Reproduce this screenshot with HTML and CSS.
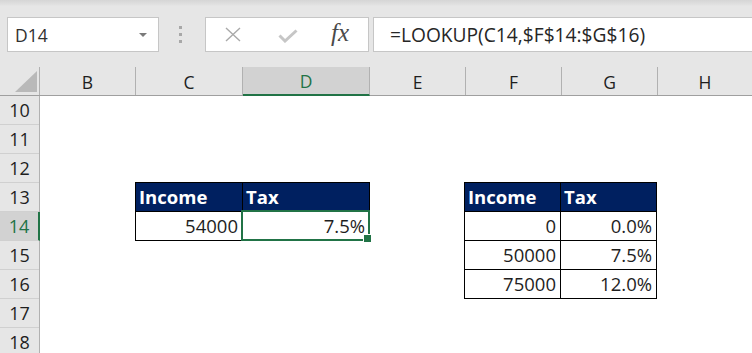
FILE: index.html
```html
<!DOCTYPE html>
<html lang="en">
<head>
    <meta charset="UTF-8">
    <title>LOOKUP - tax rate</title>
    <link rel="stylesheet" href="styles.css">
</head>
<body>

<header class="toolbar">
    <div class="name-box">
        <span>D14</span>
        <span class="caret"></span>
    </div>
    <div class="grip"><i></i><i></i><i></i></div>
    <div class="fx-buttons">
        <svg class="icon-cancel" viewBox="0 0 16 15" width="16" height="15">
            <path d="M1 1 L15 14 M15 1 L1 14" stroke="#a9a9a9" stroke-width="1.4" fill="none" />
        </svg>
        <svg class="icon-enter" viewBox="0 0 20 14" width="20" height="14">
            <path d="M1.5 6.5 L7 12 L18.5 1.5" stroke="#c6c6c6" stroke-width="3" fill="none" />
        </svg>
        <span class="fx">fx</span>
    </div>
    <div class="formula">=LOOKUP(C14,$F$14:$G$16)</div>
</header>

<div class="col-heads">
    <div class="corner"><span class="tri"></span></div>
    <div class="ch col-b">B</div>
    <div class="ch col-c">C</div>
    <div class="ch col-d active">D</div>
    <div class="ch col-e">E</div>
    <div class="ch col-f">F</div>
    <div class="ch col-g">G</div>
    <div class="ch col-h">H</div>
</div>

<main class="sheet">
    <div class="row-heads">
        <div class="rh">10</div>
        <div class="rh">11</div>
        <div class="rh">12</div>
        <div class="rh">13</div>
        <div class="rh active">14</div>
        <div class="rh">15</div>
        <div class="rh">16</div>
        <div class="rh">17</div>
        <div class="rh">18</div>
    </div>

    <div class="cells">
        <!-- input table -->
        <div class="tbl tbl-input">
            <div class="cell head">Income</div>
            <div class="cell head">Tax</div>
            <div class="cell num">54000</div>
            <div class="cell num selected">7.5%</div>
        </div>

        <!-- lookup table -->
        <div class="tbl tbl-rates">
            <div class="cell head">Income</div>
            <div class="cell head">Tax</div>
            <div class="cell num">0</div>
            <div class="cell num">0.0%</div>
            <div class="cell num">50000</div>
            <div class="cell num">7.5%</div>
            <div class="cell num">75000</div>
            <div class="cell num">12.0%</div>
        </div>
    </div>
</main>

</body>
</html>
```

FILE: styles.css
```css
:root {
    --chrome-bg: #e6e6e6;
    --head-bg: #e6e6e6;
    --head-active-bg: #d2d2d2;
    --head-line: #b1b1b1;
    --row-line: #d0d0d0;
    --excel-green: #217346;
    --navy: #002060;
    --text: #1e1e1e;
    --font-cell: 'Open Sans', 'Noto Sans', sans-serif;
}

/* --- Reset --- */
* { margin: 0; padding: 0; box-sizing: border-box; }
html, body { height: 353px; }
body {
    background: #ffffff;
    color: var(--text);
    font-family: var(--font-cell);
    overflow: hidden;
}

/* --- Formula bar --- */
.toolbar {
    height: 67px;
    display: flex;
    align-items: flex-start;
    padding: 17px 0 0 7px;
    background: linear-gradient(#d5d5d5 0, #dfdfdf 4px, var(--chrome-bg) 6px);
}

.name-box {
    width: 152px;
    height: 35px;
    background: #fff;
    border: 1px solid #c6c6c6;
    display: flex;
    align-items: center;
    justify-content: space-between;
    padding: 0 11px 0 7px;
    font-size: 17.5px;
    color: #303030;
}
.caret {
    width: 0;
    height: 0;
    border-left: 4px solid transparent;
    border-right: 4px solid transparent;
    border-top: 4px solid #7a7a7a;
    margin-top: 1px;
}

.grip {
    margin: 9px 0 0 20px;
    width: 4px;
    display: flex;
    flex-direction: column;
    gap: 4px;
}
.grip i {
    display: block;
    width: 3px;
    height: 3px;
    background: #a8a8a8;
}

.fx-buttons {
    margin-left: 22px;
    width: 164px;
    height: 35px;
    background: #fff;
    border: 1px solid #c6c6c6;
    display: flex;
    align-items: center;
    padding-left: 19px;
}
.icon-enter { margin-left: 37px; margin-top: 3px; }
.fx {
    margin-left: 33px;
    font-family: 'Liberation Serif', 'DejaVu Serif', serif;
    font-style: italic;
    font-size: 25px;
    color: #4a4a4a;
    margin-top: -3px;
}

.formula {
    flex: 1;
    margin-left: 4px;
    height: 35px;
    background: #fff;
    border: 1px solid #c6c6c6;
    border-right: none;
    display: flex;
    align-items: center;
    padding-left: 16px;
    font-size: 19.2px;
    color: #262626;
    white-space: nowrap;
}

/* --- Column headers --- */
.col-heads {
    display: flex;
    height: 29px;
    background: var(--head-bg);
    border-bottom: 1px solid #9f9f9f;
}
.corner {
    width: 40px;
    border-right: 1px solid var(--head-line);
    display: flex;
    align-items: flex-end;
    justify-content: flex-end;
    padding: 0 2px 3px 0;
}
.corner .tri {
    width: 22px;
    height: 21px;
    background: #b9b9b9;
    clip-path: polygon(100% 0, 100% 100%, 0 100%);
}
.ch {
    border-right: 1px solid var(--head-line);
    display: flex;
    align-items: flex-end;
    justify-content: center;
    font-size: 17.5px;
    line-height: 1;
    padding-bottom: 4px;
}
.col-b { width: 96px; }
.col-c { width: 107px; }
.col-d { width: 127px; }
.col-e, .col-f, .col-g { width: 96px; }
.col-h { flex: 1; border-right: none; }
.ch.active {
    background: var(--head-active-bg);
    color: var(--excel-green);
    border-bottom: 2px solid var(--excel-green);
    margin-bottom: -1px;
}

/* --- Sheet body --- */
.sheet {
    display: flex;
}
.row-heads {
    width: 40px;
    flex-shrink: 0;
    background: var(--head-bg);
    border-right: 1px solid var(--head-line);
}
.rh {
    height: 29px;
    border-bottom: 1px solid var(--row-line);
    display: flex;
    align-items: flex-end;
    justify-content: center;
    font-size: 18px;
    line-height: 1;
    padding-bottom: 5px;
}
.rh.active {
    background: var(--head-active-bg);
    color: var(--excel-green);
    margin-right: -1px;
    border-right: 2px solid var(--excel-green);
}

.cells {
    flex: 1;
    display: flex;
    align-items: flex-start;
    padding-top: 86px;
}

/* --- Tables --- */
.tbl {
    display: grid;
    border-left: 1px solid #000;
    border-top: 1px solid #000;
}
.tbl-input {
    margin-left: 95px;
    grid-template-columns: 107px 127px;
}
.tbl-rates {
    margin-left: 94px;
    grid-template-columns: 96px 96px;
}
.cell {
    height: 29px;
    border-right: 1px solid #000;
    border-bottom: 1px solid #000;
    display: flex;
    align-items: flex-end;
    padding: 0 4px 5px 4px;
    font-size: 18.5px;
    line-height: 1;
    white-space: nowrap;
}
.cell.head {
    background: var(--navy);
    color: #fff;
    font-weight: 700;
    padding-left: 3px;
}
.cell.num {
    justify-content: flex-end;
}

/* --- Active cell --- */
.cell.selected {
    position: relative;
}
.cell.selected::after {
    content: '';
    position: absolute;
    top: -2px;
    left: -2px;
    right: -1px;
    bottom: -1px;
    border: 2px solid var(--excel-green);
    z-index: 1;
}
.cell.selected::before {
    content: '';
    position: absolute;
    right: -2px;
    bottom: -2px;
    width: 7px;
    height: 7px;
    background: var(--excel-green);
    border-left: 1px solid #fff;
    border-top: 1px solid #fff;
    z-index: 2;
}
```
